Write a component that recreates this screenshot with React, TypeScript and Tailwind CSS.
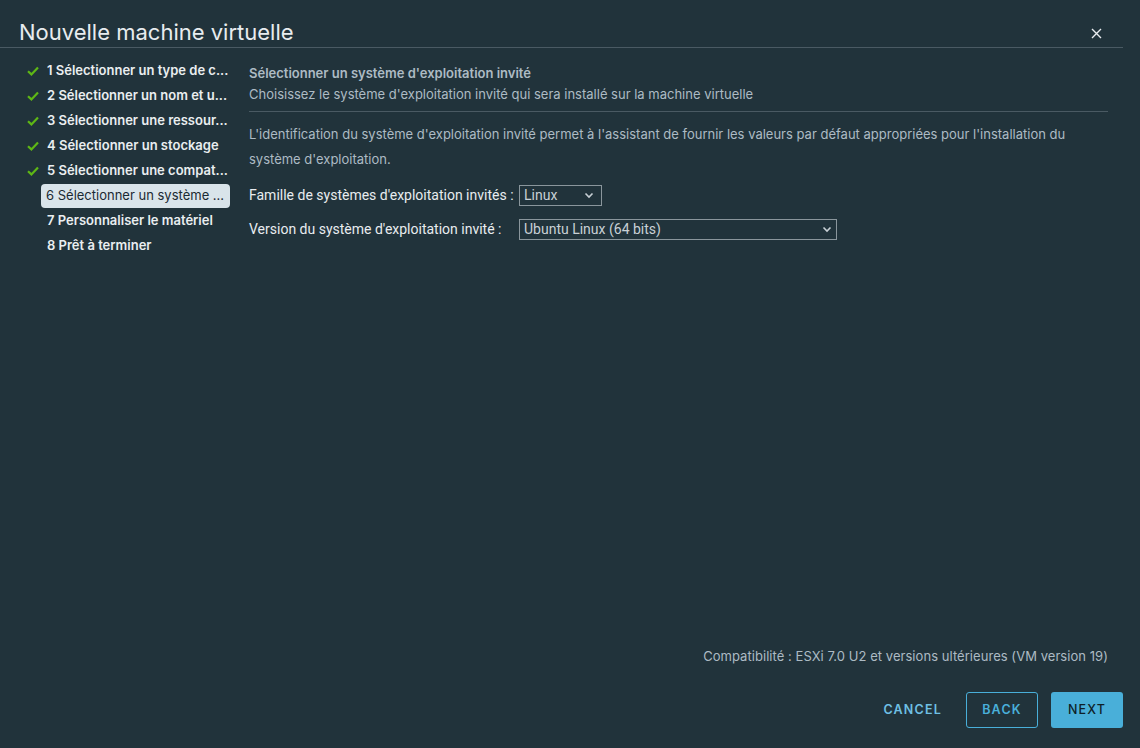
import React from "react";

const Check = () => (
  <svg width="12" height="10" viewBox="0 0 12 10" className="shrink-0">
    <path d="M1 5.2 L4.4 8.4 L11 1.4" stroke="#5eb715" strokeWidth="2.2" fill="none" />
  </svg>
);

const Chevron = () => (
  <svg width="10" height="7" viewBox="0 0 10 7">
    <path d="M1.5 1.5 L5 5 L8.5 1.5" stroke="#c8d0d5" strokeWidth="1.6" fill="none" />
  </svg>
);

const steps = [
  { n: "1 Sélectionner un type de c...", done: true },
  { n: "2 Sélectionner un nom et u...", done: true },
  { n: "3 Sélectionner une ressour...", done: true },
  { n: "4 Sélectionner un stockage", done: true },
  { n: "5 Sélectionner une compat...", done: true },
  { n: "6 Sélectionner un système ...", done: false, active: true },
  { n: "7 Personnaliser le matériel", done: false },
  { n: "8 Prêt à terminer", done: false },
];

export default function App() {
  return (
    <div
      className="w-[1140px] h-[748px] bg-[#21333b] flex flex-col overflow-hidden"
      style={{ fontFamily: "Inter, 'Open Sans', sans-serif" }}
    >
      <div className="flex items-center justify-between pl-[19px] pr-[18px] pt-[17px] h-[48px] border-b border-[#4a5a63] w-[1123px]">
        <span className="text-[22px] text-[#e8ecef] leading-[30px]">Nouvelle machine virtuelle</span>
        <svg width="11" height="11" viewBox="0 0 11 11" className="mr-[3px] mt-[2px]">
          <path d="M1 1 L10 10 M10 1 L1 10" stroke="#e8ecef" strokeWidth="1.4" />
        </svg>
      </div>
      <div className="flex flex-1 pl-[25px]">
        <div className="w-[205px] pt-[10px] flex flex-col">
          {steps.map((s) => (
            <div key={s.n} className="flex items-center h-[25px]">
              <div className="w-[22px] flex justify-start pl-[2px]">{s.done ? <Check /> : null}</div>
              <div
                className={
                  s.active
                    ? "h-[24px] flex items-center pl-[5px] pr-[2px] -ml-[6px] rounded-[4px] bg-[#d9e4ea] text-[#1b2a32] text-[13px] w-[189px] whitespace-nowrap overflow-hidden"
                    : "text-[13px] font-semibold text-[#eaeef0] whitespace-nowrap"
                }
              >
                {s.n}
              </div>
            </div>
          ))}
        </div>
        <div className="flex-1 pl-[19px] pr-[32px] pt-[15px] flex flex-col">
          <div className="text-[13px] font-semibold text-[#adbbc4] leading-[20px]">
            Sélectionner un système d'exploitation invité
          </div>
          <div className="text-[13px] text-[#adbbc4] leading-[22px] pb-[6px] border-b border-[#4a5a63]">
            Choisissez le système d'exploitation invité qui sera installé sur la machine virtuelle
          </div>
          <div className="text-[13px] text-[#adbbc4] leading-[25px] pt-[10px]">
            L'identification du système d'exploitation invité permet à l'assistant de fournir les valeurs par défaut appropriées pour l'installation du
            <br />
            système d'exploitation.
          </div>
          <div
            className="flex items-center mt-[13px] text-[14px] text-[#e8ecef]"
            style={{ fontFamily: "Roboto, sans-serif" }}
          >
            <span className="w-[270px]">Famille de systèmes d'exploitation invités :</span>
            <div className="w-[83px] h-[21px] border border-[#8a969c] flex items-center justify-between pl-[4px] pr-[7px] text-[#c8d0d5]">
              <span>Linux</span>
              <Chevron />
            </div>
          </div>
          <div
            className="flex items-center mt-[13px] text-[14px] text-[#e8ecef]"
            style={{ fontFamily: "Roboto, sans-serif" }}
          >
            <span className="w-[270px]">Version du système d'exploitation invité :</span>
            <div className="w-[318px] h-[21px] border border-[#8a969c] flex items-center justify-between pl-[4px] pr-[4px] text-[#c8d0d5]">
              <span>Ubuntu Linux (64 bits)</span>
              <Chevron />
            </div>
          </div>
          <div className="flex-1" />
          <div className="text-right text-[13px] text-[#adbbc4] pb-[26px] tracking-[0.05px]">
            Compatibilité : ESXi 7.0 U2 et versions ultérieures (VM version 19)
          </div>
        </div>
      </div>
      <div className="flex justify-end items-center pr-[17px] pb-[20px]">
        <button className="h-[36px] px-[24px] text-[12.5px] font-semibold tracking-[1.2px] text-[#6fc0e4]">CANCEL</button>
        <button className="h-[36px] w-[72px] border border-[#49afd9] rounded-[3px] text-[12.5px] font-semibold tracking-[1.2px] text-[#49afd9]">
          BACK
        </button>
        <button className="h-[36px] w-[72px] bg-[#49afd9] rounded-[3px] text-[12.5px] font-medium tracking-[1.2px] text-[#0f1f28] ml-[13px]">
          NEXT
        </button>
      </div>
    </div>
  );
}
